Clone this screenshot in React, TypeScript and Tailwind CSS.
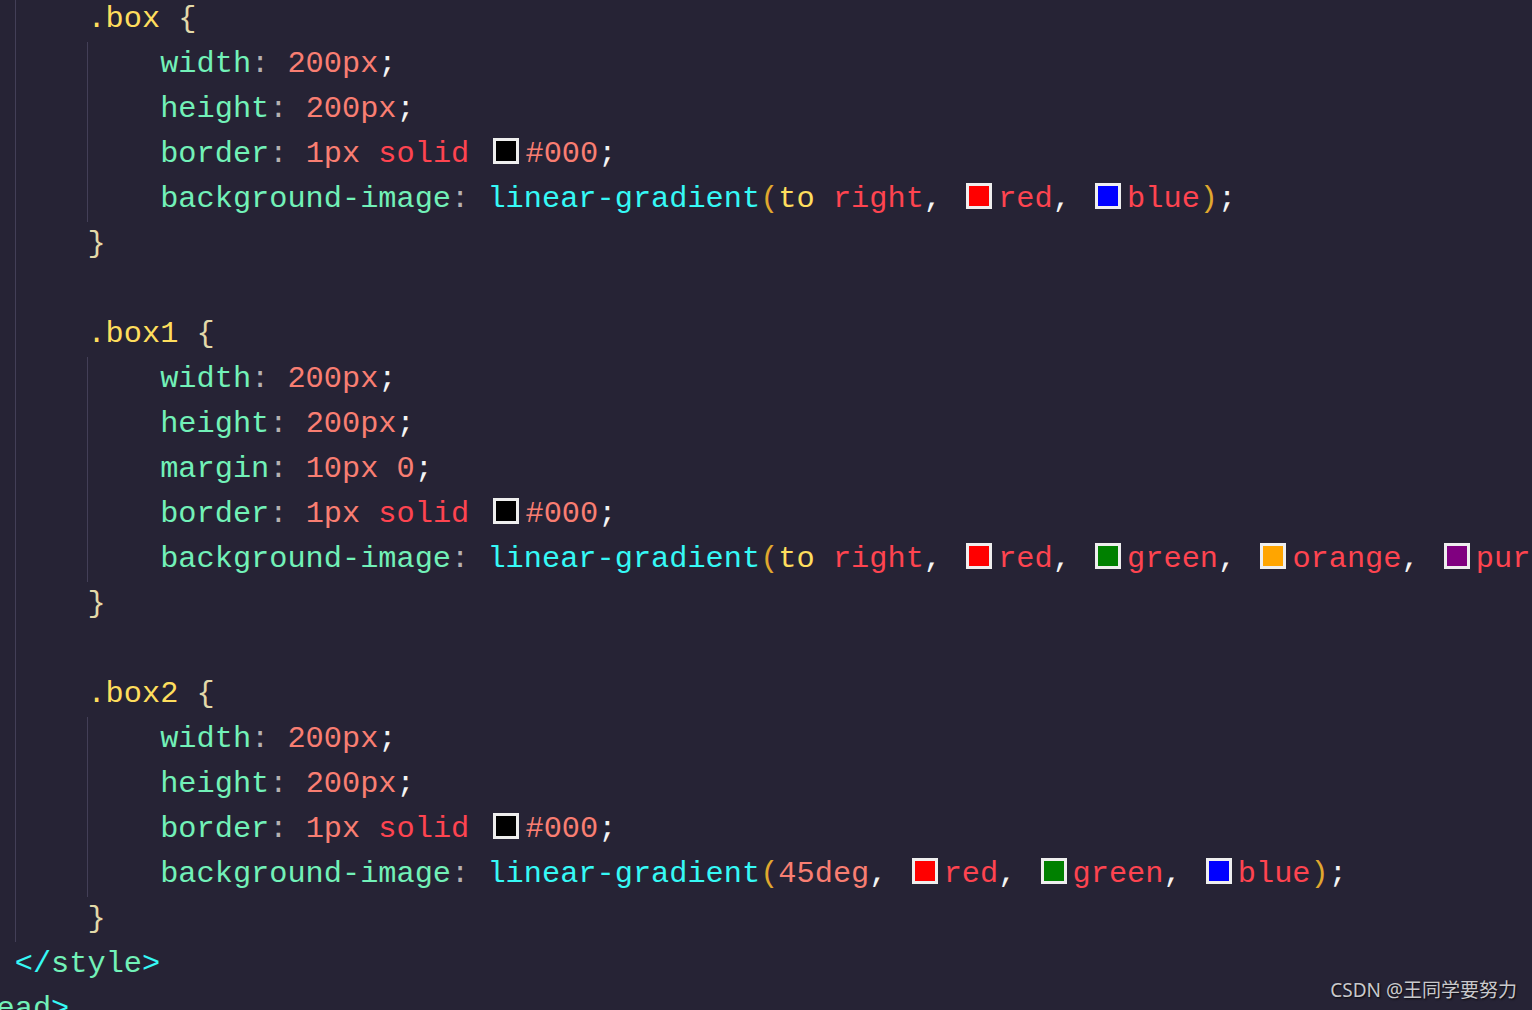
import React from "react";

type Tok = { t: string; c?: string; sw?: string };

const C = {
  sel: "text-[#fede5d]",
  brace: "text-[#e3d9a9]",
  prop: "text-[#72f1b8]",
  colon: "text-[#b6b1b1]",
  num: "text-[#f97e72]",
  kw: "text-[#fe4450]",
  punc: "text-[#f4f4f4]",
  fn: "text-[#36f9f6]",
  paren: "text-[#e0a82e]",
  to: "text-[#fede5d]",
};

const sw = (color: string): Tok => ({ t: "", sw: color });

const prop = (name: string, rest: Tok[]): Tok[] => [
  { t: name, c: C.prop },
  { t: ": ", c: C.colon },
  ...rest,
  { t: ";", c: C.punc },
];

const px = (v: string): Tok[] => [{ t: v, c: C.num }];

const border: Tok[] = [
  { t: "1px", c: C.num },
  { t: " " },
  { t: "solid", c: C.kw },
  { t: " " },
  sw("#000000"),
  { t: "#000", c: C.num },
];

const colorArg = (name: string, color: string, last = false): Tok[] => [
  sw(color),
  { t: name, c: C.kw },
  ...(last ? [] : [{ t: ",", c: C.punc }, { t: " " }]),
];

const grad = (first: Tok[], args: Tok[]): Tok[] => [
  { t: "linear-gradient", c: C.fn },
  { t: "(", c: C.paren },
  ...first,
  ...args,
];

const toRight: Tok[] = [
  { t: "to", c: C.to },
  { t: " " },
  { t: "right", c: C.kw },
  { t: ",", c: C.punc },
  { t: " " },
];

type Line = { g: number; toks: Tok[] };

const sel = (name: string): Line => ({
  g: 2,
  toks: [
    { t: name, c: C.sel },
    { t: " " },
    { t: "{", c: C.brace },
  ],
});
const close: Line = { g: 2, toks: [{ t: "}", c: C.brace }] };
const empty: Line = { g: 2, toks: [] };
const body = (toks: Tok[]): Line => ({ g: 3, toks });

const lines: Line[] = [
  sel(".box"),
  body(prop("width", px("200px"))),
  body(prop("height", px("200px"))),
  body(prop("border", border)),
  body(
    prop("background-image", [
      ...grad(toRight, [...colorArg("red", "#ff0000"), ...colorArg("blue", "#0000ff", true)]),
      { t: ")", c: C.paren },
    ])
  ),
  close,
  empty,
  sel(".box1"),
  body(prop("width", px("200px"))),
  body(prop("height", px("200px"))),
  body(
    prop("margin", [
      { t: "10px", c: C.num },
      { t: " " },
      { t: "0", c: C.num },
    ])
  ),
  body(prop("border", border)),
  body(
    prop("background-image", [
      ...grad(toRight, [
        ...colorArg("red", "#ff0000"),
        ...colorArg("green", "#008000"),
        ...colorArg("orange", "#ffa500"),
        ...colorArg("purple", "#800080", true),
      ]),
      { t: ")", c: C.paren },
    ])
  ),
  close,
  empty,
  sel(".box2"),
  body(prop("width", px("200px"))),
  body(prop("height", px("200px"))),
  body(prop("border", border)),
  body(
    prop("background-image", [
      ...grad(
        [
          { t: "45deg", c: C.num },
          { t: ",", c: C.punc },
          { t: " " },
        ],
        [
          ...colorArg("red", "#ff0000"),
          ...colorArg("green", "#008000"),
          ...colorArg("blue", "#0000ff", true),
        ]
      ),
      { t: ")", c: C.paren },
    ])
  ),
  close,
  {
    g: 1,
    toks: [
      { t: "</", c: C.fn },
      { t: "style", c: C.prop },
      { t: ">", c: C.fn },
    ],
  },
  {
    g: 0,
    toks: [
      { t: "</", c: C.fn },
      { t: "head", c: C.prop },
      { t: ">", c: C.fn },
    ],
  },
];

function Swatch({ color }: { color: string }) {
  return (
    <span
      className="mx-[6px] inline-block h-[26px] w-[26px] border-[3px] border-[#eeeeee] align-[-2px]"
      style={{ backgroundColor: color }}
    />
  );
}

export default function App() {
  return (
    <div className="relative h-[1010px] w-[1532px] overflow-hidden bg-[#262335]">
      <div
        className="-mt-[3px] -ml-[58px] whitespace-pre text-[30.3px] leading-[45px]"
        style={{ fontFamily: '"Liberation Mono", "DejaVu Sans Mono", monospace' }}
      >
        {lines.map((ln, i) => (
          <div key={i} className="flex h-[45px] items-stretch">
            {Array.from({ length: ln.g }).map((_, k) => (
              <span
                key={k}
                className={
                  k === 0
                    ? "inline-block w-[4ch] shrink-0"
                    : "inline-block w-[4ch] shrink-0 border-l border-[#433f57]"
                }
              />
            ))}
            <span className="block">
              {ln.toks.map((tk, j) =>
                tk.sw ? (
                  <Swatch key={j} color={tk.sw} />
                ) : (
                  <span key={j} className={tk.c}>
                    {tk.t}
                  </span>
                )
              )}
            </span>
          </div>
        ))}
      </div>
      <div
        className="absolute bottom-[6px] right-[15px] text-[19px] text-[#c9c9cc] [text-shadow:1px_1px_2px_rgba(0,0,0,0.8)]"
        style={{ fontFamily: '"Noto Sans", "Noto Sans CJK SC", sans-serif' }}
      >
        CSDN @王同学要努力
      </div>
    </div>
  );
}
